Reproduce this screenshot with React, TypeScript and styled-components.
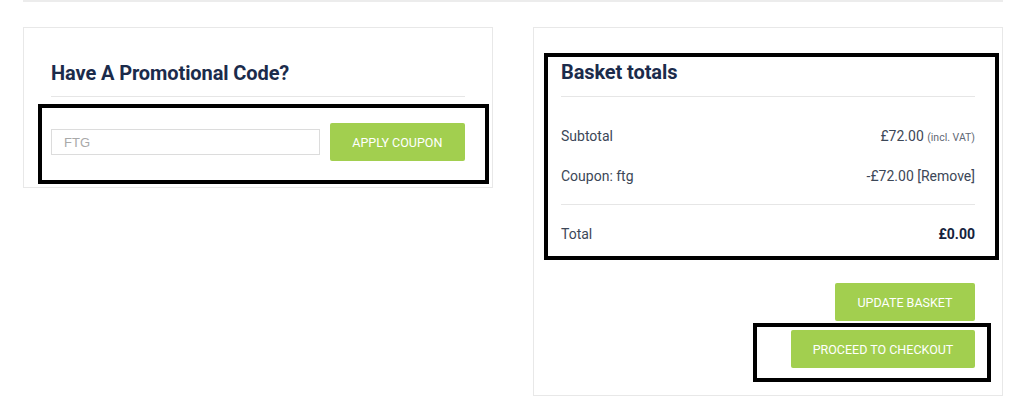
import React, { useState } from 'react';
import styled, { createGlobalStyle } from 'styled-components';

const GlobalStyle = createGlobalStyle`
  html, body {
    margin: 0;
    padding: 0;
    background: #ffffff;
  }
  body {
    font-family: Roboto, "Noto Sans", sans-serif;
    color: #3c4757;
  }
`;

const Page = styled.div`
  width: 980px;
  margin-left: 23px;
  border-top: 2px solid #ececec;
  padding-top: 25px;
  display: flex;
  align-items: flex-start;
  gap: 40px;
`;

const Card = styled.section<{ $bottom: number }>`
  box-sizing: border-box;
  width: 470px;
  border: 1px solid #e8e8e8;
  padding: 0 27px ${(p) => p.$bottom}px 27px;
  display: flex;
  flex-direction: column;
`;

// black outline used to call out a block of the card
const Outline = styled.div<{ $margin: string; $padding: string }>`
  border: 4px solid #000;
  margin: ${(p) => p.$margin};
  padding: ${(p) => p.$padding};
`;

const Heading = styled.h2<{ $top?: number }>`
  margin: ${(p) => p.$top ?? 0}px 0 0 0;
  font-size: 20px;
  line-height: 24px;
  font-weight: 700;
  color: #1b2b4b;
  letter-spacing: -0.1px;
`;

const Rule = styled.hr<{ $top: number }>`
  border: 0;
  border-top: 1px solid #e6e6e6;
  margin: ${(p) => p.$top}px 0 0 0;
`;

const CouponForm = styled.form`
  display: flex;
  align-items: center;
  gap: 10px;
`;

const CodeInput = styled.input`
  box-sizing: border-box;
  width: 270px;
  height: 26px;
  border: 1px solid #dcdcdc;
  padding: 0 12px;
  font-family: "Liberation Sans", Arial, sans-serif;
  font-size: 13px;
  color: #555;
  outline: none;

  &::placeholder {
    color: #a9a9a9;
  }
`;

const GreenButton = styled.button<{ $width: number }>`
  width: ${(p) => p.$width}px;
  height: 38px;
  border: 0;
  border-radius: 2px;
  background: #a2cf4f;
  color: #ffffff;
  font-family: Roboto, "Noto Sans", sans-serif;
  font-size: 12.5px;
  text-transform: uppercase;
  cursor: pointer;
`;

const Rows = styled.div`
  margin-top: 19px;
  display: flex;
  flex-direction: column;
`;

const Row = styled.div`
  display: flex;
  justify-content: space-between;
  align-items: center;
  height: 40px;
  font-size: 14px;
  color: #3c4757;
`;

const Amount = styled.span<{ $bold?: boolean }>`
  color: ${(p) => (p.$bold ? '#14223d' : '#3c4757')};
  font-weight: ${(p) => (p.$bold ? 700 : 400)};
`;

const Note = styled.small`
  font-size: 10.5px;
  color: #5f6875;
`;

const RemoveLink = styled.a`
  color: #3c4757;
  text-decoration: none;
  cursor: pointer;
`;

const Actions = styled.div`
  margin-top: 23px;
  display: flex;
  flex-direction: column;
  align-items: flex-end;
`;

const App: React.FC = () => {
  const [code, setCode] = useState('');

  return (
    <>
      <GlobalStyle />
      <Page>
        <Card $bottom={3}>
          <Heading $top={33}>Have A Promotional Code?</Heading>
          <Rule $top={11} />
          <Outline $margin="7px -24px 0 -13px" $padding="15px 20px 19px 9px">
            <CouponForm onSubmit={(e) => e.preventDefault()}>
              <CodeInput
                name="coupon_code"
                value={code}
                placeholder="FTG"
                onChange={(e) => setCode(e.target.value)}
              />
              <GreenButton type="submit" $width={136}>
                Apply coupon
              </GreenButton>
            </CouponForm>
          </Outline>
        </Card>

        <Card $bottom={13}>
          <Outline $margin="25px -24px 0 -17px" $padding="3px 20px 2px 13px">
            <Heading>Basket totals</Heading>
            <Rule $top={12} />
            <Rows>
              <Row>
                <span>Subtotal</span>
                <Amount>
                  £72.00 <Note>(incl. VAT)</Note>
                </Amount>
              </Row>
              <Row>
                <span>Coupon: ftg</span>
                <Amount>
                  -£72.00 <RemoveLink>[Remove]</RemoveLink>
                </Amount>
              </Row>
              <Rule $top={8} />
              <Row style={{ marginTop: 9 }}>
                <span>Total</span>
                <Amount $bold>£0.00</Amount>
              </Row>
            </Rows>
          </Outline>
          <Actions>
            <GreenButton $width={140}>Update basket</GreenButton>
            <Outline $margin="2px -16px 0 0" $padding="3px 12px 10px 34px">
              <GreenButton $width={184}>Proceed to checkout</GreenButton>
            </Outline>
          </Actions>
        </Card>
      </Page>
    </>
  );
};

export default App;
